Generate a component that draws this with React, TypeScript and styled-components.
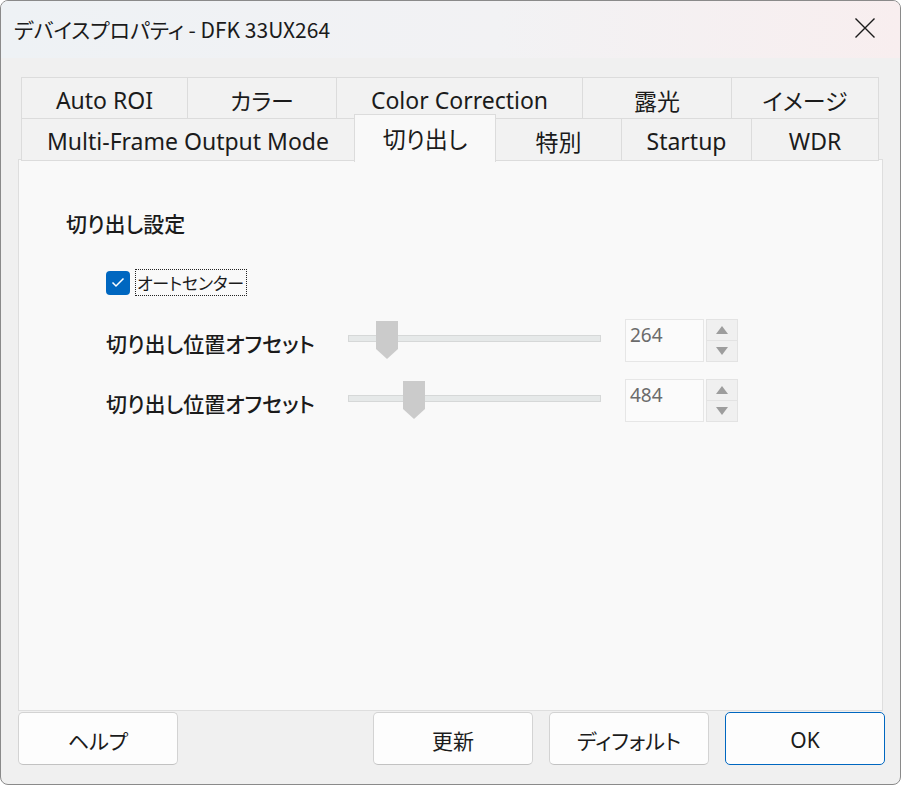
import React from "react";
import styled, { createGlobalStyle } from "styled-components";

const Global = createGlobalStyle`
  html, body { margin: 0; padding: 0; background: #ffffff; }
  #root { width: 901px; height: 785px; }
`;

const UI = `"Noto Sans", "Noto Sans CJK JP", sans-serif`;
const JP = `"Noto Sans CJK JP", "Noto Sans", sans-serif`;

const Window = styled.div`
  box-sizing: border-box;
  width: 901px;
  height: 785px;
  border: 1px solid #8a8a8a;
  border-radius: 8px;
  overflow: hidden;
  display: flex;
  flex-direction: column;
  background: #f0f0f0;
  font-family: ${UI};
  color: #1b1b1b;
`;

const TitleBar = styled.div`
  height: 57px;
  flex: none;
  display: flex;
  align-items: center;
  justify-content: space-between;
  padding-left: 13px;
  background: linear-gradient(90deg, #eef2f5 0%, #f2f2f4 55%, #f8eeef 100%);
`;

const Title = styled.div`
  font-family: ${JP};
  font-feature-settings: "palt";
  font-size: 21px;
  line-height: 26px;
  margin-top: -2px;
`;

const CloseButton = styled.div`
  width: 70px;
  height: 57px;
  display: flex;
  align-items: center;
  justify-content: center;
  margin-top: -4px;
`;

const Body = styled.div`
  flex: 1;
  display: flex;
  flex-direction: column;
  padding: 19px 17px 19px 17px;
  min-height: 0;
`;

const Tabs = styled.div`
  display: flex;
  flex-direction: column;
  margin: 0 5px 0 3px;
`;

const TabRow = styled.div<{ $h: number }>`
  display: flex;
  align-items: flex-start;
  height: ${(p) => p.$h}px;
`;

const Tab = styled.div<{ $w: number; $h: number; $active?: boolean }>`
  box-sizing: border-box;
  flex: none;
  width: ${(p) => p.$w}px;
  height: ${(p) => (p.$active ? p.$h + 5 : p.$h)}px;
  margin-top: ${(p) => (p.$active ? -4 : 0)}px;
  position: relative;
  z-index: ${(p) => (p.$active ? 2 : 1)};
  display: flex;
  align-items: center;
  justify-content: center;
  padding-top: ${(p) => (p.$active ? 0 : 3)}px;
  padding-bottom: ${(p) => (p.$active ? 2 : 0)}px;
  background: ${(p) => (p.$active ? "#f9f9f9" : "#f2f2f2")};
  border: 1px solid #dcdcdc;
  border-bottom: ${(p) => (p.$active ? "none" : "1px solid #dcdcdc")};
  margin-left: -1px;
  font-size: 23px;
  font-feature-settings: "palt";
  white-space: nowrap;
  &:first-child { margin-left: 0; }
`;

const Panel = styled.div`
  flex: 1;
  box-sizing: border-box;
  background: #f9f9f9;
  border: 1px solid #dedede;
  margin-top: -1px;
  padding: 49px 0 0 47px;
  display: flex;
  flex-direction: column;
  align-items: flex-start;
  font-family: ${JP};
  font-feature-settings: "palt";
`;

const GroupTitle = styled.div`
  font-size: 21px;
  line-height: 28px;
  font-weight: 500;
`;

const CheckRow = styled.div`
  display: flex;
  align-items: center;
  gap: 5px;
  margin: 32px 0 0 40px;
`;

const CheckBox = styled.div`
  width: 24px;
  height: 24px;
  border-radius: 4px;
  background: #0067c0;
  display: flex;
  align-items: center;
  justify-content: center;
`;

const CheckLabel = styled.div`
  font-size: 17px;
  line-height: 25px;
  padding: 0 2px 0 1px;
  border: 1px dotted #222;
  letter-spacing: -0.2px;
`;

const SliderRow = styled.div<{ $top: number }>`
  display: grid;
  grid-template-columns: 242px 253px auto;
  align-items: center;
  height: 43px;
  margin: ${(p) => p.$top}px 0 0 40px;
`;

const FieldLabel = styled.div`
  font-size: 21px;
  font-weight: 500;
  line-height: 28px;
  margin-top: 4px;
  white-space: nowrap;
`;

const Slider = styled.div`
  position: relative;
  width: 253px;
  height: 43px;
`;

const Track = styled.div`
  position: absolute;
  left: 0;
  right: 0;
  top: 16px;
  height: 7px;
  box-sizing: border-box;
  background: #e6e9e9;
  border: 1px solid #d6d8d8;
`;

const Thumb = styled.div`
  position: absolute;
  top: 2px;
  width: 22px;
  height: 38px;
  background: #cbcbcb;
  clip-path: polygon(0 0, 100% 0, 100% 74%, 50% 100%, 0 74%);
`;

const Spin = styled.div`
  display: flex;
  gap: 2px;
  height: 43px;
  margin-left: 24px;
`;

const SpinField = styled.div`
  box-sizing: border-box;
  width: 79px;
  height: 43px;
  background: #fbfbfb;
  border: 1px solid #e6e6e6;
  padding: 2px 0 0 4px;
  font-family: ${UI};
  font-size: 19px;
  line-height: 26px;
  color: #6b6b6b;
`;

const SpinButtons = styled.div`
  display: flex;
  flex-direction: column;
  width: 32px;
`;

const SpinButton = styled.div`
  flex: 1;
  box-sizing: border-box;
  background: #f0f0f0;
  border: 1px solid #e3e3e3;
  display: flex;
  align-items: center;
  justify-content: center;
  & + & { border-top: none; }
`;

const Footer = styled.div`
  display: flex;
  gap: 16px;
  margin: 1px -2px 0 0;
  height: 53px;
  flex: none;
`;

const Spacer = styled.div`
  flex: 1;
`;

const Button = styled.div<{ $primary?: boolean }>`
  box-sizing: border-box;
  width: 160px;
  height: 53px;
  border-radius: 5px;
  background: #fdfdfd;
  border: 1px solid ${(p) => (p.$primary ? "#0067c0" : "#d3d3d3")};
  border-bottom-color: ${(p) => (p.$primary ? "#0067c0" : "#c2c2c2")};
  display: flex;
  align-items: center;
  justify-content: center;
  font-family: ${(p) => (p.$primary ? UI : JP)};
  font-feature-settings: "palt";
  font-size: 21px;
  padding-top: 2px;
`;

const Triangle = ({ up }: { up?: boolean }) => (
  <svg width="12" height="8" viewBox="0 0 12 8">
    <polygon points={up ? "6,0 12,8 0,8" : "0,0 12,0 6,8"} fill="#9d9d9d" />
  </svg>
);

const row1 = [
  { label: "Auto ROI", w: 167 },
  { label: "カラー", w: 150 },
  { label: "Color Correction", w: 247 },
  { label: "露光", w: 150 },
  { label: "イメージ", w: 148 },
];
const row2 = [
  { label: "Multi-Frame Output Mode", w: 334 },
  { label: "切り出し", w: 142, active: true },
  { label: "特別", w: 127 },
  { label: "Startup", w: 131 },
  { label: "WDR", w: 128 },
];

const sliders = [
  { label: "切り出し位置オフセット", value: 264, pos: 28, top: 23 },
  { label: "切り出し位置オフセット", value: 484, pos: 55, top: 17 },
];

export default function App() {
  return (
    <>
      <Global />
      <Window>
        <TitleBar>
          <Title>デバイスプロパティ - DFK 33UX264</Title>
          <CloseButton>
            <svg width="22" height="22" viewBox="0 0 22 22">
              <path d="M1.5 1.5 L20.5 20.5 M20.5 1.5 L1.5 20.5" stroke="#1b1b1b" strokeWidth="1.4" fill="none" />
            </svg>
          </CloseButton>
        </TitleBar>
        <Body>
          <Tabs>
            <TabRow $h={41}>
              {row1.map((t) => (
                <Tab key={t.label} $w={t.w} $h={42}>
                  {t.label}
                </Tab>
              ))}
            </TabRow>
            <TabRow $h={42}>
              {row2.map((t) => (
                <Tab key={t.label} $w={t.w} $h={43} $active={t.active}>
                  {t.label}
                </Tab>
              ))}
            </TabRow>
          </Tabs>
          <Panel>
            <GroupTitle>切り出し設定</GroupTitle>
            <CheckRow>
              <CheckBox>
                <svg width="14" height="11" viewBox="0 0 14 11">
                  <polyline points="1.5,5.5 5,9 12.5,1.5" stroke="#ffffff" strokeWidth="1.5" fill="none" />
                </svg>
              </CheckBox>
              <CheckLabel>オートセンター</CheckLabel>
            </CheckRow>
            {sliders.map((s, i) => (
              <SliderRow key={i} $top={s.top}>
                <FieldLabel>{s.label}</FieldLabel>
                <Slider>
                  <Track />
                  <Thumb style={{ left: s.pos }} />
                </Slider>
                <Spin>
                  <SpinField>{s.value}</SpinField>
                  <SpinButtons>
                    <SpinButton>
                      <Triangle up />
                    </SpinButton>
                    <SpinButton>
                      <Triangle />
                    </SpinButton>
                  </SpinButtons>
                </Spin>
              </SliderRow>
            ))}
          </Panel>
          <Footer>
            <Button>ヘルプ</Button>
            <Spacer />
            <Button>更新</Button>
            <Button>ディフォルト</Button>
            <Button $primary>OK</Button>
          </Footer>
        </Body>
      </Window>
    </>
  );
}
